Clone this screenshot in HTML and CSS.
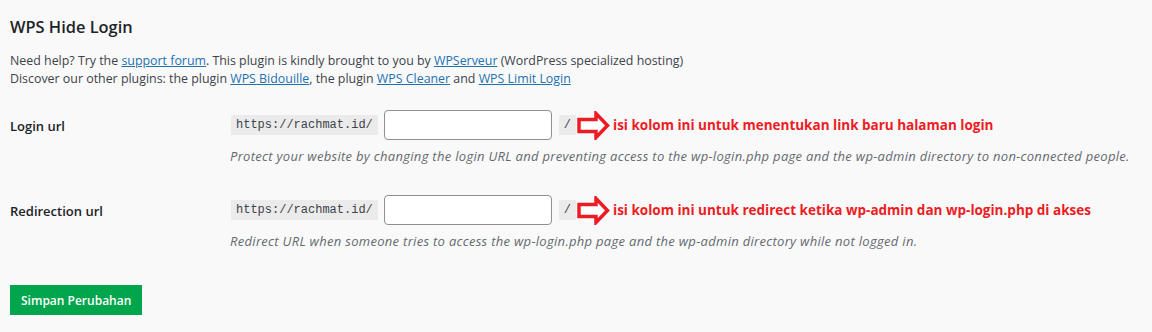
FILE: index.html
```html
<!DOCTYPE html>
<html lang="en">
<head>
    <meta charset="UTF-8">
    <title>WPS Hide Login</title>
    <link rel="stylesheet" href="styles.css">
</head>
<body>
    <div class="wrap">
        <h2 class="section-title">WPS Hide Login</h2>
        <p class="intro">
            Need help? Try the <a href="#">support forum</a>. This plugin is kindly brought to you by <a href="#">WPServeur</a> (WordPress specialized hosting)<br>
            Discover our other plugins: the plugin <a href="#">WPS Bidouille</a>, the plugin <a href="#">WPS Cleaner</a> and <a href="#">WPS Limit Login</a>
        </p>

        <form class="settings-form">
            <table class="form-table">
                <tr>
                    <th><label for="login-url">Login url</label></th>
                    <td>
                        <div class="url-row">
                            <code class="url-part">https://rachmat.id/</code>
                            <input type="text" id="login-url" class="url-input">
                            <code class="url-part">/</code>
                            <span class="note">
                                <svg class="note-arrow" width="33" height="29" viewBox="0 0 33 29"><path d="M2 8.5 H19 V2.5 L30.5 14.5 L19 26.5 V20.5 H2 Z"/></svg>
                                isi kolom ini untuk menentukan link baru halaman login
                            </span>
                        </div>
                        <p class="description">Protect your website by changing the login URL and preventing access to the wp-login.php page and the wp-admin directory to non-connected people.</p>
                    </td>
                </tr>
                <tr>
                    <th><label for="redirect-url">Redirection url</label></th>
                    <td>
                        <div class="url-row">
                            <code class="url-part">https://rachmat.id/</code>
                            <input type="text" id="redirect-url" class="url-input">
                            <code class="url-part">/</code>
                            <span class="note">
                                <svg class="note-arrow" width="33" height="29" viewBox="0 0 33 29"><path d="M2 8.5 H19 V2.5 L30.5 14.5 L19 26.5 V20.5 H2 Z"/></svg>
                                isi kolom ini untuk redirect ketika wp-admin dan wp-login.php di akses
                            </span>
                        </div>
                        <p class="description">Redirect URL when someone tries to access the wp-login.php page and the wp-admin directory while not logged in.</p>
                    </td>
                </tr>
            </table>
            <p class="submit">
                <button type="button" class="save-btn">Simpan Perubahan</button>
            </p>
        </form>
    </div>
</body>
</html>
```

FILE: styles.css
```css
/* Base */
:root {
    --bg: #f9f9f9;
    --text: #3c434a;
    --heading: #1d2327;
    --muted: #646970;
    --link: #2271b1;
    --code-bg: #ebebeb;
    --border: #8c8f94;
    --note-red: #ed1c24;
    --save-green: #00a54c;
}

* {
    box-sizing: border-box;
}

body {
    margin: 0;
    background: var(--bg);
    color: var(--text);
    font-family: "Open Sans", "Noto Sans", sans-serif;
    font-size: 12.4px;
    line-height: 18px;
}

.wrap {
    padding: 0 10px;
}

.section-title {
    margin: 0;
    padding-top: 15px;
    font-size: 16.4px;
    line-height: 24px;
    font-weight: 600;
    color: var(--heading);
}

.intro {
    margin: 13px 0 0;
}

a {
    color: var(--link);
    text-decoration: underline;
}

/* Settings table */
.form-table {
    border-collapse: collapse;
    margin-top: 7px;
}

.form-table th {
    width: 220px;
    padding: 0 10px 0 0;
    text-align: left;
    vertical-align: top;
    font-size: 13px;
    font-weight: 600;
    color: var(--heading);
}

.form-table th label {
    display: block;
    padding-top: 22px;
}

.form-table td {
    padding: 15px 0;
}

.url-row {
    display: flex;
    align-items: center;
    gap: 6px;
}

.url-part {
    background: var(--code-bg);
    padding: 0 5px;
    line-height: 20px;
    font-family: "Liberation Mono", "DejaVu Sans Mono", monospace;
    font-size: 12px;
    color: var(--text);
    margin-left: 1px;
}

.url-input {
    width: 168px;
    height: 30px;
    border: 1px solid var(--border);
    border-radius: 4px;
    background: #fff;
    margin: 0;
}

.note {
    display: flex;
    align-items: center;
    gap: 3px;
    margin-left: -5px;
    color: var(--note-red);
    font-weight: 700;
    font-size: 13.5px;
}

.note-arrow path {
    fill: #fff;
    stroke: var(--note-red);
    stroke-width: 3.5;
    stroke-linejoin: miter;
}

.description {
    margin: 7px 0 0;
    font-size: 13px;
    letter-spacing: 0.3px;
    font-style: italic;
    color: var(--muted);
}

/* Save */
.submit {
    margin: 20px 0 0;
}

.save-btn {
    height: 30px;
    padding: 0 11px;
    border: none;
    border-radius: 0;
    background: var(--save-green);
    color: #fff;
    font-family: inherit;
    font-size: 12px;
    font-weight: 600;
    cursor: pointer;
}
```
